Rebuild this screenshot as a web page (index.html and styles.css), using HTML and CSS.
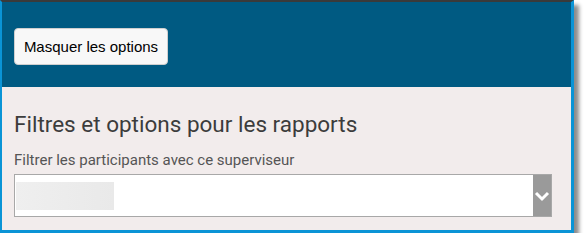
FILE: index.html
```html
<!DOCTYPE html>
<html lang="fr">
<head>
<meta charset="utf-8">
<link rel="stylesheet" href="styles.css">
</head>
<body>
<div class="frame">
  <div class="header">
    <button class="toggle" type="button">Masquer les options</button>
  </div>
  <div class="content">
    <h2 class="title">Filtres et options pour les rapports</h2>
    <label class="label">Filtrer les participants avec ce superviseur</label>
    <div class="select">
      <div class="placeholder"></div>
      <div class="arrow">
        <svg width="18" height="14" viewBox="0 0 18 14"><path d="M3 4 L9 10 L15 4" fill="none" stroke="#fff" stroke-width="3"/></svg>
      </div>
    </div>
  </div>
</div>
</body>
</html>
```

FILE: styles.css
```css
html, body {
  margin: 0;
  padding: 0;
  background: #ffffff;
}
.frame {
  width: 569px;
  border-top: 2px solid #3a3a3a;
  border-left: 2px solid #0a94d6;
  border-right: 3px solid #0a94d6;
  border-bottom: 3px solid #0a94d6;
  box-shadow: 5px 5px 4px rgba(0, 0, 0, 0.45);
  background: #f2ecec;
}
.header {
  height: 85px;
  background: #005a82;
  padding: 26px 0 0 12px;
  box-sizing: border-box;
}
.toggle {
  height: 37px;
  width: 154px;
  background: #f8f8f8;
  border: 1px solid #cfcfcf;
  border-radius: 4px;
  font-family: "Liberation Sans", Arial, sans-serif;
  font-size: 15px;
  color: #000;
  padding: 0;
}
.content {
  padding: 22px 19px 13px 12px;
}
.title {
  margin: 0;
  font-family: Roboto, "Noto Sans", sans-serif;
  font-weight: 400;
  font-size: 22.5px;
  line-height: 30px;
  color: #3c3c3c;
}
.label {
  display: block;
  margin-top: 12px;
  font-family: Roboto, "Noto Sans", sans-serif;
  font-size: 15px;
  line-height: 18px;
  color: #555;
}
.select {
  margin-top: 5px;
  height: 41px;
  border: 1px solid #a8a8a8;
  background: #fff;
  display: flex;
  justify-content: space-between;
  align-items: stretch;
}
.placeholder {
  width: 98px;
  margin: 7px 0 6px 1px;
  background: linear-gradient(to right, #efefef, #e9e9e9);
}
.arrow {
  width: 18px;
  background: #9a9a9a;
  display: flex;
  align-items: center;
  justify-content: center;
}
```
